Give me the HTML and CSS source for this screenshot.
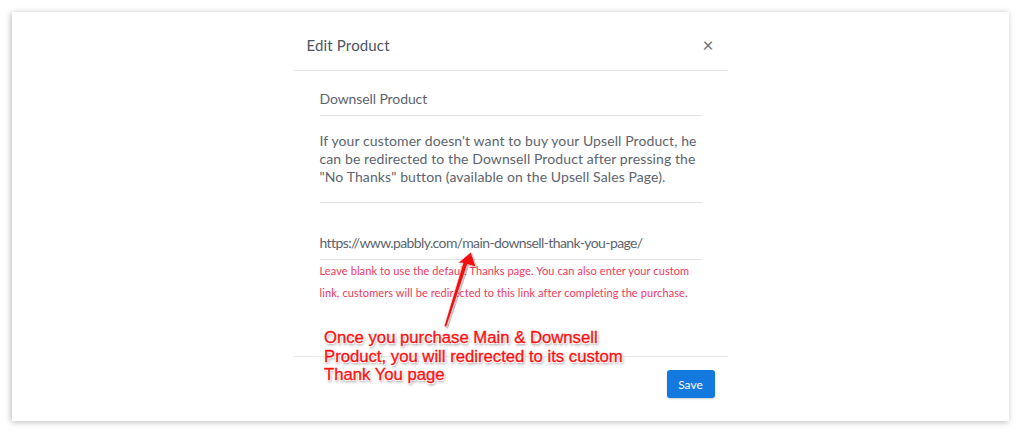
FILE: index.html
```html
<!DOCTYPE html>
<html>
<head>
<meta charset="utf-8">
<link rel="stylesheet" href="styles.css">
</head>
<body>
<div class="frame">
  <div class="modal">
    <div class="modal-header">
      <span class="modal-title">Edit Product</span>
      <span class="close">&times;</span>
    </div>
    <div class="modal-body">
      <div class="field field-name">Downsell Product</div>
      <div class="field field-desc">If your customer doesn't want to buy your Upsell Product, he can be redirected to the Downsell Product after pressing the "No Thanks" button (available on the Upsell Sales Page).</div>
      <div class="field field-url">https://www.pabbly.com/main-downsell-thank-you-page/</div>
      <div class="help">Leave blank to use the default Thanks page. You can also enter your custom link, customers will be redirected to this link after completing the purchase.</div>
    </div>
    <div class="modal-footer">
      <button class="btn-save">Save</button>
    </div>
  </div>
  <svg class="arrow" width="1021" height="433" viewBox="0 0 1021 433">
    <polygon points="471,252 476,267 467.5,264.5 446.5,327 444,326.5 463,263 458,263" fill="#000" opacity="0.25" transform="translate(1.5,1.5)"/>
    <polygon points="471,252 476,267 467.5,264.5 446.5,327 444,326.5 463,263 458,263" fill="#f01010" stroke="#fff" stroke-width="0.6"/>
  </svg>
  <div class="note">Once you purchase Main &amp; Downsell<br>Product, you will redirected to its custom<br>Thank You page</div>
</div>
</body>
</html>
```
FILE: styles.css
```css
html, body {
  margin: 0;
  padding: 0;
  background: #ffffff;
}
body {
  padding: 12px;
  width: 1021px;
  height: 433px;
  box-sizing: border-box;
  overflow: hidden;
  font-family: Lato, "Liberation Sans", sans-serif;
}
.frame {
  position: relative;
  width: 997px;
  height: 409px;
  background: #fff;
  box-shadow: -1px 1px 6px rgba(0, 0, 0, 0.28);
  display: flex;
  justify-content: center;
}
.modal {
  width: 434px;
  display: flex;
  flex-direction: column;
}
.modal-header {
  display: flex;
  justify-content: space-between;
  align-items: center;
  padding: 23px 13px 15px 13px;
  border-bottom: 1px solid #e6e8ea;
}
.modal-title {
  font-size: 15px;
  line-height: 20px;
  color: #4d555f;
  letter-spacing: 0.15px;
}
.close {
  font-size: 19px;
  line-height: 20px;
  color: #6a727c;
  font-weight: 400;
  margin-right: 1px;
}
.modal-body {
  padding: 18px 26px 0 26px;
  height: 285px;
  box-sizing: border-box;
}
.field {
  font-size: 14px;
  color: #5c646e;
  border-bottom: 1px solid #dfe1e3;
}
.field-name {
  line-height: 20px;
  padding-bottom: 6px;
  letter-spacing: -0.1px;
}
.field-desc {
  line-height: 18px;
  padding: 16px 0 16px 0;
  letter-spacing: 0.1px;
}
.field-url {
  line-height: 20px;
  margin-top: 30px;
  padding-bottom: 6px;
  letter-spacing: -0.6px;
}
.help {
  font-size: 11px;
  letter-spacing: 0.1px;
  line-height: 22px;
  color: #f0385c;
}
.modal-footer {
  border-top: 1px solid #e6e8ea;
  padding: 13px 13px 0 0;
  display: flex;
  justify-content: flex-end;
}
.btn-save {
  width: 48px;
  height: 28px;
  border: none;
  border-radius: 3px;
  background: #1479de;
  color: #fff;
  font-family: Lato, "Liberation Sans", sans-serif;
  font-size: 12px;
  padding: 0;
  box-shadow: 0 1px 2px rgba(0, 0, 0, 0.2);
}
.arrow {
  position: absolute;
  left: -12px;
  top: -12px;
  pointer-events: none;
}
.note {
  position: absolute;
  left: 312px;
  top: 317px;
  font-family: "Liberation Sans", Arial, sans-serif;
  font-size: 16.7px;
  line-height: 18.5px;
  color: #ff1010;
  -webkit-text-stroke: 0.35px #ff1010;
  text-shadow: 1px 0 0 #fff, -1px 0 0 #fff, 0 1px 0 #fff, 0 -1px 0 #fff, 1px 1px 0 #fff, -1px -1px 0 #fff, 1px -1px 0 #fff, -1px 1px 0 #fff, 1px 2px 3px rgba(0, 0, 0, 0.55);
}
```
